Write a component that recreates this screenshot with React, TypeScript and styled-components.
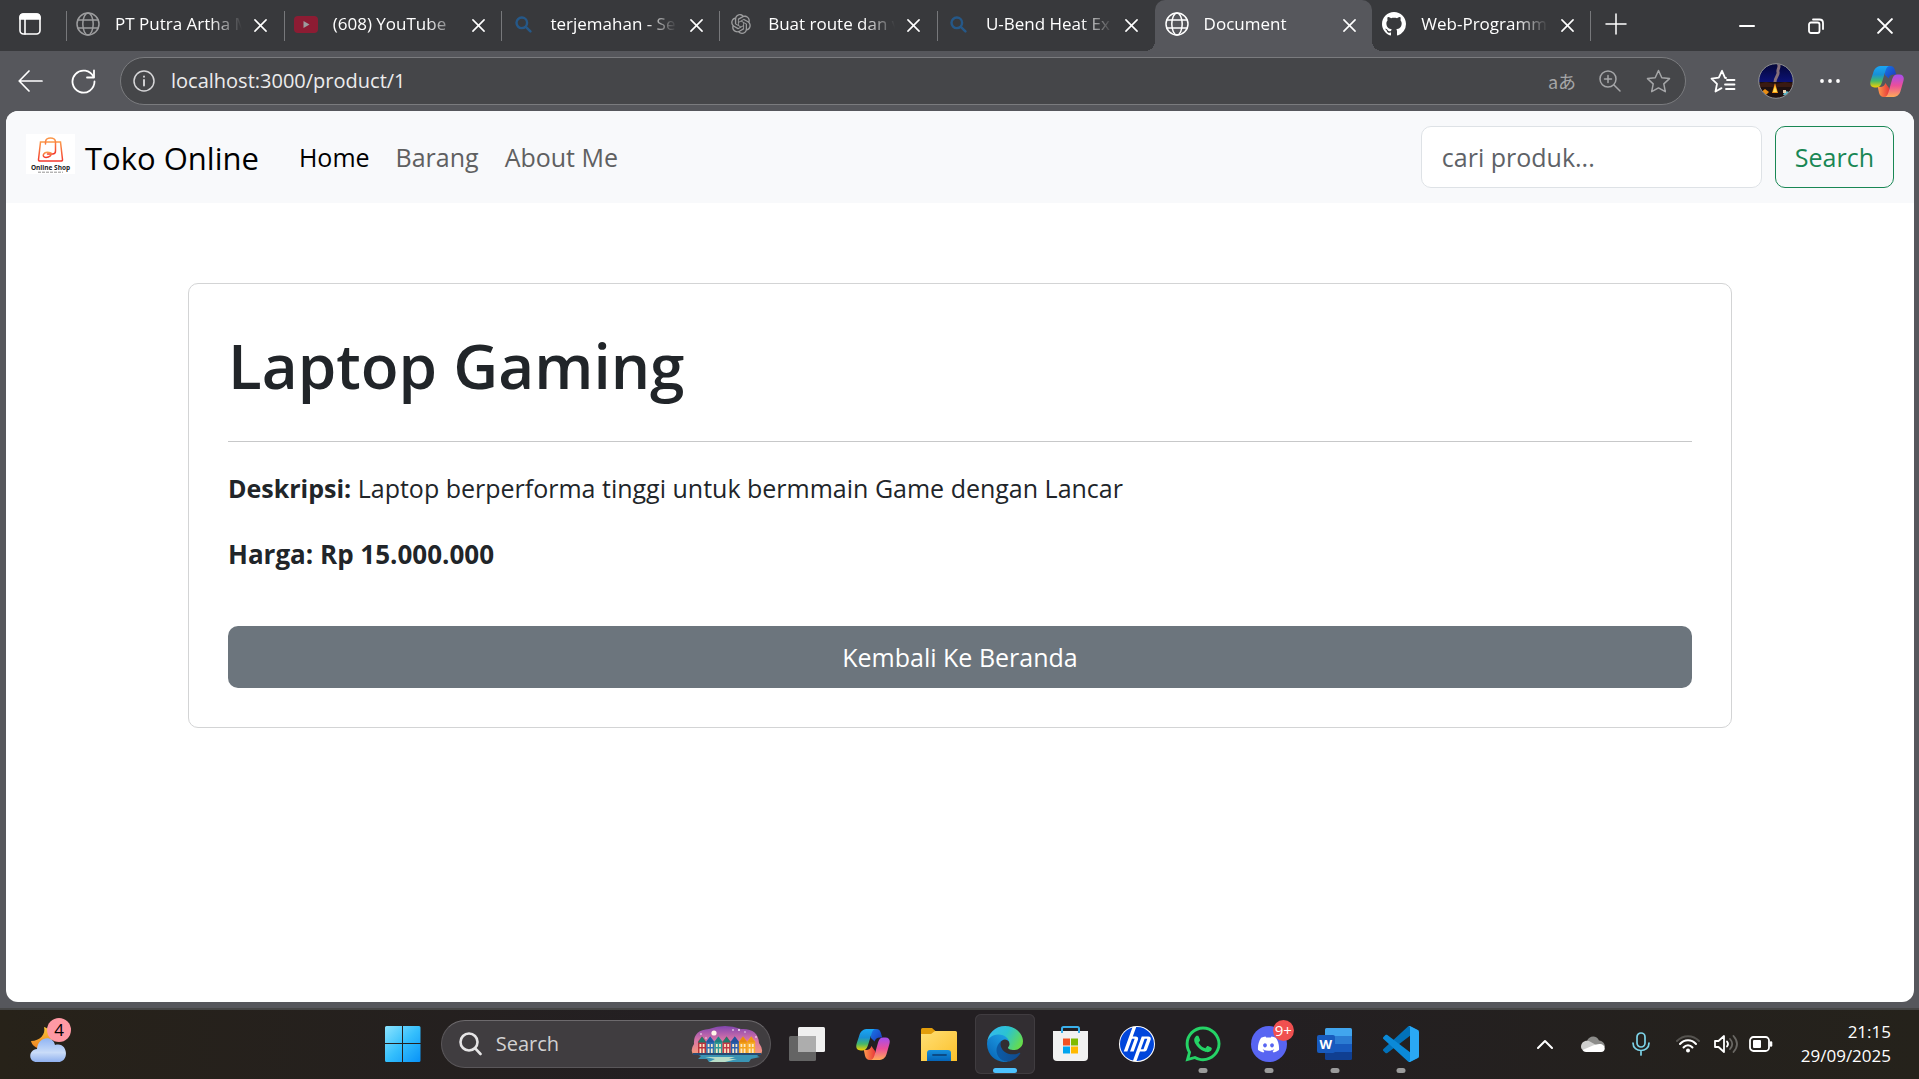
import React from "react";
import styled, { createGlobalStyle, css } from "styled-components";
import { RiOpenaiFill } from "react-icons/ri";
import { FaWhatsapp, FaDiscord } from "react-icons/fa6";
import { SiHp } from "react-icons/si";

const GlobalStyle = createGlobalStyle`
  * { box-sizing: border-box; }
  body { margin: 0; font-family: "Open Sans", "Noto Sans", "Noto Sans CJK JP", sans-serif; }
  button, input { font-family: inherit; margin: 0; }
  svg { display: block; flex: none; }
`;

const Screen = styled.div`
  display: flex;
  flex-direction: column;
  min-height: 100vh;
  background: #56575c;
`;

const plainButton = css`
  display: flex;
  align-items: center;
  justify-content: center;
  padding: 0;
  border: 0;
  background: none;
  color: #fff;
`;

/* ---------- Tab strip ---------- */

const TabStrip = styled.header`
  display: flex;
  height: 51px;
  background: #38393c;
`;

const PanelButton = styled.button`
  ${plainButton}
  width: 66px;
  padding-right: 6px;
  padding-bottom: 4px;
`;

const Tabs = styled.div`
  display: flex;
  flex: 1;
  min-width: 0;
`;

const Tab = styled.div<{ $active?: boolean; $divider?: boolean }>`
  position: relative;
  display: flex;
  align-items: center;
  flex: 1 1 0;
  min-width: 0;
  padding: 0 16px 3px 10px;

  ${(p) =>
    p.$divider &&
    css`
      background: linear-gradient(#77787b, #77787b) 0 11px / 1px 30px no-repeat;
    `}

  ${(p) =>
    p.$active &&
    css`
      background: #56575c;
      border-radius: 10px 10px 0 0;

      &::before,
      &::after {
        content: "";
        position: absolute;
        bottom: 0;
        width: 10px;
        height: 10px;
      }
      &::before {
        left: -10px;
        background: radial-gradient(circle at 0 0, transparent 10px, #56575c 10px);
      }
      &::after {
        right: -10px;
        background: radial-gradient(circle at 100% 0, transparent 10px, #56575c 10px);
      }
    `}
`;

const TabSelect = styled.button`
  ${plainButton}
  flex: 1;
  min-width: 0;
  justify-content: flex-start;
  gap: 15px;
`;

const TabIcon = styled.span<{ $dim?: boolean }>`
  display: flex;
  justify-content: center;
  width: 24px;
  flex: none;
  opacity: ${(p) => (p.$dim ? 0.5 : 1)};
`;

const TabTitle = styled.span`
  flex: 1;
  min-width: 0;
  overflow: hidden;
  white-space: nowrap;
  text-align: left;
  font-size: 17px;
  line-height: 24px;
  mask-image: linear-gradient(to right, #000 calc(100% - 42px), transparent calc(100% - 10px));
`;

const TabClose = styled.button`
  ${plainButton}
  width: 14px;
  margin-left: 2px;
  padding-top: 2px;
`;

const StripEnd = styled.div`
  display: flex;
  justify-content: space-between;
  width: 329px;
  background: linear-gradient(#77787b, #77787b) 0 11px / 1px 30px no-repeat;
`;

const NewTab = styled.button`
  ${plainButton}
  width: 52px;
  padding-bottom: 4px;
`;

const WindowControls = styled.div`
  display: flex;
`;

const WindowButton = styled.button`
  ${plainButton}
  width: 69px;
`;

/* ---------- Toolbar ---------- */

const Toolbar = styled.div`
  display: flex;
  align-items: center;
  height: 60px;
  padding: 0 3px 0 14px;
`;

const ToolButton = styled.button<{ $w: number }>`
  ${plainButton}
  width: ${(p) => p.$w}px;
  height: 48px;
`;

const AddressBar = styled.form`
  display: flex;
  align-items: center;
  flex: 1;
  height: 48px;
  margin: 0 10px 0 0;
  padding: 0 3px 0 12px;
  background: #454649;
  border: 1px solid #7a7b7e;
  border-radius: 24px;
`;

const AddressInput = styled.input`
  flex: 1;
  min-width: 0;
  padding: 0 0 0 16px;
  border: 0;
  background: none;
  color: #ececed;
  font-size: 20px;
  line-height: 28px;
`;

const BarButton = styled.button`
  ${plainButton}
  width: 48px;
  color: #a5a6a8;
  font-size: 18px;
  line-height: 24px;
  font-family: "Noto Sans CJK JP", sans-serif;
`;

/* ---------- Web page ---------- */

const Page = styled.div`
  flex: 1;
  margin: 0 5px 6px 6px;
  background: #fff;
  border-radius: 12px;
  overflow: hidden;
  color: #212529;
  font-size: 25px;
  line-height: 40px;
`;

const Navbar = styled.nav`
  display: flex;
  align-items: center;
  padding: 15px 20px;
  background: #f8f9fb;
`;

const Brand = styled.a`
  display: flex;
  align-items: flex-start;
  gap: 10px;
  margin-right: 27px;
  padding-top: 2px;
  color: #000;
  font-size: 31px;
  line-height: 48px;
  text-decoration: none;
`;

const NavLinks = styled.ul`
  display: flex;
  flex: 1;
  margin: 0;
  padding: 0;
  list-style: none;
`;

const NavLink = styled.a<{ $active?: boolean }>`
  display: block;
  padding: 0 13px;
  color: ${(p) => (p.$active ? "#000" : "#5f6061")};
  text-decoration: none;
`;

const SearchForm = styled.form`
  display: flex;
  gap: 13px;
`;

const SearchInput = styled.input`
  width: 341px;
  height: 62px;
  padding: 0 20px;
  border: 1px solid #dee2e6;
  border-radius: 10px;
  background: #fff;
  font-size: 25px;
  &::placeholder {
    color: #5e6267;
    opacity: 1;
  }
`;

const SearchButton = styled.button`
  height: 62px;
  padding: 0 19px;
  border: 1px solid #198754;
  border-radius: 10px;
  background: none;
  color: #198754;
  font-size: 25px;
`;

const Container = styled.main`
  max-width: 1544px;
  margin: 80px auto 0;
`;

const Card = styled.article`
  padding: 39px;
  border: 1px solid #d3d4d5;
  border-radius: 10px;
`;

const Title = styled.h1`
  margin: 0 0 34px;
  font-size: 62px;
  font-weight: 600;
  line-height: 84px;
`;

const Rule = styled.hr`
  height: 1px;
  margin: 0 0 26px;
  border: 0;
  background: #c7c8c9;
`;

const Text = styled.p<{ $bold?: boolean }>`
  margin: 0 0 26px;
  font-size: ${(p) => (p.$bold ? 26 : 25)}px;
  font-weight: ${(p) => (p.$bold ? 700 : 400)};
`;

const BackLink = styled.a`
  display: block;
  margin-top: 52px;
  padding: 11px 20px;
  border-radius: 10px;
  background: #6c757d;
  color: #fff;
  text-align: center;
  text-decoration: none;
`;

/* ---------- Taskbar ---------- */

const Taskbar = styled.footer`
  display: grid;
  grid-template-columns: 16fr auto 21fr;
  height: 71px;
  padding-bottom: 1px;
  border-top: 2px solid #454544;
  background: linear-gradient(to right, #272219, #231f22 35%, #231f22 65%, #25221b);
  color: #fff;
`;

const Widgets = styled.div`
  display: flex;
  align-items: center;
  padding-left: 29px;
`;

const TaskGroup = styled.div`
  display: flex;
  align-items: center;
`;

const TaskButton = styled.button<{ $active?: boolean }>`
  ${plainButton}
  position: relative;
  width: 60px;
  height: 60px;
  margin: 0 3px;
  border-radius: 6px;
  ${(p) =>
    p.$active &&
    css`
      background: #322e32;
      box-shadow: inset 0 0 0 1px #403c40;
    `}
`;

const Indicator = styled.span<{ $active?: boolean }>`
  position: absolute;
  bottom: 1px;
  left: 50%;
  width: ${(p) => (p.$active ? 24 : 9)}px;
  height: 5px;
  border-radius: 3px;
  background: ${(p) => (p.$active ? "#4cc2ff" : "#9b9b9b")};
  transform: translateX(-50%);
`;

const Badge = styled.span<{ $tone: "pink" | "red" }>`
  position: absolute;
  top: ${(p) => (p.$tone === "pink" ? 4 : 6)}px;
  right: ${(p) => (p.$tone === "pink" ? 0 : 5)}px;
  width: ${(p) => (p.$tone === "pink" ? 24 : 21)}px;
  height: ${(p) => (p.$tone === "pink" ? 24 : 21)}px;
  border-radius: 50%;
  background: ${(p) => (p.$tone === "pink" ? "#ff99a4" : "#f05050")};
  color: ${(p) => (p.$tone === "pink" ? "#000" : "#fff")};
  font-size: ${(p) => (p.$tone === "pink" ? 17 : 15)}px;
  line-height: ${(p) => (p.$tone === "pink" ? 24 : 20)}px;
  text-align: center;
`;

const WidgetButton = styled.button`
  ${plainButton}
  position: relative;
  width: 42px;
  height: 60px;
  justify-content: flex-start;
`;

const TaskSearch = styled.label`
  display: flex;
  align-items: center;
  width: 330px;
  height: 48px;
  margin: 0 3px 0 5px;
  padding: 0 7px 0 17px;
  border: 1px solid #5a575a;
  border-top-color: #6d6a6d;
  border-radius: 24px;
  background: #403d40;
`;

const TaskSearchInput = styled.input`
  flex: 1;
  min-width: 0;
  padding: 0 0 0 14px;
  border: 0;
  background: none;
  font-size: 20px;
  line-height: 28px;
  &::placeholder {
    color: #d2d1d2;
    opacity: 1;
  }
`;

const Tray = styled.div`
  display: flex;
  align-items: center;
  justify-content: flex-end;
  padding-right: 28px;
`;

const TrayButton = styled.button<{ $w: number }>`
  ${plainButton}
  width: ${(p) => p.$w}px;
  height: 48px;
`;

const Clock = styled.time`
  width: 104px;
  margin-left: 5px;
  white-space: nowrap;
  display: flex;
  flex-direction: column;
  align-items: flex-end;
  font-size: 17px;
  line-height: 24px;
`;

const WordTile = styled.span`
  position: absolute;
  left: 12px;
  top: 21px;
  width: 18px;
  height: 18px;
  border-radius: 2px;
  background: #185abd;
  color: #fff;
  font-size: 13px;
  font-weight: 700;
  line-height: 18px;
  text-align: center;
`;

const HpDisk = styled.span`
  display: flex;
  padding: 1px;
  border-radius: 50%;
  background: #fff;
  color: #0046dc;
`;

const DiscordDisk = styled.span`
  display: flex;
  align-items: center;
  justify-content: center;
  width: 36px;
  height: 36px;
  border-radius: 50%;
  background: #5865f2;
`;

/* ---------- Drawings ---------- */

const stroke = { fill: "none", stroke: "currentColor", strokeLinecap: "round", strokeLinejoin: "round" } as const;

const CrossIcon = ({ size = 13, width = 1.7 }: { size?: number; width?: number }) => (
  <svg width={size} height={size} viewBox="0 0 14 14" {...stroke} strokeWidth={width}>
    <path d="M1 1l12 12M13 1L1 13" />
  </svg>
);

const GlobeIcon = () => (
  <svg width="24" height="24" viewBox="0 0 24 24" {...stroke} strokeWidth="1.5">
    <circle cx="12" cy="12" r="11" />
    <ellipse cx="12" cy="12" rx="5.2" ry="11" />
    <path d="M2 8h20M2 16h20" />
  </svg>
);

const YoutubeIcon = () => (
  <svg width="24" height="17" viewBox="0 0 24 17">
    <rect width="24" height="17" rx="4" fill="#e0002c" />
    <path d="M9.5 5l6 3.5-6 3.5z" fill="#fff" />
  </svg>
);

const BlueSearchIcon = () => (
  <svg width="17" height="17" viewBox="0 0 17 17" fill="none" stroke="#1478d4" strokeWidth="2.4" strokeLinecap="round">
    <circle cx="6.8" cy="6.8" r="5.3" />
    <path d="M10.8 10.8L15.4 15.4" />
  </svg>
);

const GithubIcon = () => (
  <svg width="24" height="24" viewBox="0 0 16 16" fill="currentColor">
    <path d="M8 0C3.58 0 0 3.58 0 8c0 3.54 2.29 6.53 5.47 7.59.4.07.55-.17.55-.38 0-.19-.01-.82-.01-1.49-2.01.37-2.53-.49-2.69-.94-.09-.23-.48-.94-.82-1.13-.28-.15-.68-.52-.01-.53.63-.01 1.08.58 1.23.82.72 1.21 1.87.87 2.33.66.07-.52.28-.87.51-1.07-1.78-.2-3.64-.89-3.64-3.95 0-.87.31-1.59.82-2.15-.08-.2-.36-1.02.08-2.12 0 0 .67-.21 2.2.82.64-.18 1.32-.27 2-.27s1.36.09 2 .27c1.53-1.04 2.2-.82 2.2-.82.44 1.1.16 1.92.08 2.12.51.56.82 1.27.82 2.15 0 3.07-1.87 3.75-3.65 3.95.29.25.54.73.54 1.48 0 1.07-.01 1.93-.01 2.2 0 .21.15.46.55.38A8.01 8.01 0 0 0 16 8c0-4.42-3.58-8-8-8z" />
  </svg>
);

const CopilotIcon = ({ id }: { id: string }) => (
  <svg width="34" height="31" viewBox="0 0 34 31">
    <defs>
      <linearGradient id={`${id}a`} x1="0" y1="0" x2="0" y2="1">
        <stop offset="0" stopColor="#1aa6f5" />
        <stop offset=".4" stopColor="#1890d6" />
        <stop offset=".7" stopColor="#45b86a" />
        <stop offset="1" stopColor="#f5d000" />
      </linearGradient>
      <linearGradient id={`${id}b`} x1="0" y1="0" x2="0" y2="1">
        <stop offset="0" stopColor="#a44df0" />
        <stop offset=".5" stopColor="#ec4f9a" />
        <stop offset="1" stopColor="#ffab58" />
      </linearGradient>
      <linearGradient id={`${id}c`} x1="0" y1="0" x2="1" y2="1">
        <stop offset="0" stopColor="#1877e8" />
        <stop offset="1" stopColor="#1d36b8" />
      </linearGradient>
      <linearGradient id={`${id}d`} x1="0" y1="0" x2="1" y2="0">
        <stop offset="0" stopColor="#ff9a4c" />
        <stop offset="1" stopColor="#e83a3a" />
      </linearGradient>
    </defs>
    <path d="M15 0h5c3 0 4.3 1.6 5 4.2L26.2 8.6H24c-3 0-4.6 1.2-5.4 4L15 9z" fill={`url(#${id}c)`} />
    <path d="M19 31h-5c-3 0-4.3-1.6-5-4.2L7.8 21H10c3 0 4.6-1.2 5.4-4L19 22z" fill={`url(#${id}d)`} />
    <path d="M12 0h8c-2.6 0-3.6 2-4.4 4.6L11.8 16.8C10.8 20 9.2 21.4 6.8 21.4H4.6C.6 21.4-.4 18.4.6 14.8L3.6 5.6C4.8 2 7.4 0 12 0z" fill={`url(#${id}a)`} />
    <path d="M22 31h-8c2.6 0 3.6-2 4.4-4.6L22.2 13c1-3.2 2.6-4.6 5-4.6h2.2c4 0 5 3 4 6.6l-3 10.4C29.2 29 26.6 31 22 31z" fill={`url(#${id}b)`} />
  </svg>
);

const StarIcon = () => (
  <svg width="25" height="25" viewBox="0 0 25 25" {...stroke} strokeWidth="1.5">
    <path d="M12.5 1.5l3.3 7.2 7.7.9-5.7 5.3 1.5 7.8-6.8-3.8-6.8 3.8 1.5-7.8L1.5 9.6l7.7-.9z" />
  </svg>
);

const FavoritesIcon = () => (
  <svg width="26" height="25" viewBox="0 0 26 25" {...stroke} strokeWidth="1.8">
    <path d="M16 9l-1-.2L12 1.8 8.8 8.7l-7.3.9 5.5 5.2-1.5 7.7 6-3.4" />
    <path d="M17 11h7.5M15 15.5h9.5M16 20h8.5" />
  </svg>
);

const AvatarIcon = () => (
  <svg width="36" height="36" viewBox="0 0 36 36">
    <defs>
      <clipPath id="avatarClip"><circle cx="18" cy="18" r="17" /></clipPath>
      <linearGradient id="avatarSky" x1="0" y1="0" x2="0" y2="1">
        <stop offset="0" stopColor="#040634" />
        <stop offset="1" stopColor="#0c1276" />
      </linearGradient>
    </defs>
    <g clipPath="url(#avatarClip)">
      <rect width="36" height="19" fill="url(#avatarSky)" />
      <rect y="19" width="36" height="17" fill="#1d0f10" />
      <path d="M0 21l8-2 9 2 10-2 9 2v3H0z" fill="#3a1a12" />
      <path d="M20 0c3 4-1 6 0 9s-3 5-3 10" fill="none" stroke="#86707a" strokeWidth="3" />
      <path d="M17 20l3 10h-6z" fill="#ff9a12" />
      <path d="M17 23l2 6h-4z" fill="#ffe25a" />
      <path d="M2 30l5-4 4 3-4 4z" fill="#e88d14" />
      <path d="M27 28l5 1-2 4-5-1z" fill="#5fb8c8" />
      <rect x="25" y="27" width="3" height="3" fill="#e8d0b0" />
    </g>
    <circle cx="18" cy="18" r="17.3" fill="none" stroke="#8b8c90" />
  </svg>
);

const ShopLogo = () => (
  <svg width="49" height="40" viewBox="0 0 49 40">
    <defs>
      <linearGradient id="bag" x1="0" y1="0" x2="0" y2="1">
        <stop offset="0" stopColor="#fb9a4b" />
        <stop offset="1" stopColor="#f4382c" />
      </linearGradient>
    </defs>
    <rect width="49" height="40" fill="#fff" />
    <g fill="none" stroke="url(#bag)" strokeWidth="1.5" strokeLinecap="round">
      <path d="M14.500 8h20l2 17.500q.2 1.500-1.500 1.500H14q-1.700 0-1.500-1.500z" />
      <path d="M19.500 10V8C19.500 2.500 29.500 2.500 29.500 8v9q0 3-3 3h-5" />
      <path d="M25 19c-8-3-10 4.500-5 4.500 3 0 6-2 5-4.500z" />
    </g>
    <text x="24.500" y="36" textAnchor="middle" fontFamily="Open Sans, sans-serif" fontSize="6.500" fontWeight="700" fill="#222">
      Online Shop
    </text>
    <path d="M12 38.200h25" stroke="#777" strokeDasharray="3 1" strokeWidth=".8" />
  </svg>
);

const WeatherIcon = () => (
  <svg width="38" height="37" viewBox="0 0 38 37">
    <defs>
      <linearGradient id="cloud" x1="0" y1="0" x2="0" y2="1">
        <stop offset="0" stopColor="#90b4f4" />
        <stop offset=".6" stopColor="#c9dcf8" />
        <stop offset="1" stopColor="#8fb0ee" />
      </linearGradient>
      <linearGradient id="moon" x1="0" y1="0" x2="0" y2="1">
        <stop offset="0" stopColor="#f8c63a" />
        <stop offset="1" stopColor="#ef8221" />
      </linearGradient>
    </defs>
    <path d="M15 1c2 7-4 14-13 14 1 5 7 9 13 7 7-2 9-8 8-12-1-5-4-8-8-9z" fill="url(#moon)" />
    <path d="M8 36c-9 0-9-12 0-13C9 10 24 9 26 19c13-4 15 17 3 17z" fill="url(#cloud)" />
  </svg>
);

const WindowsIcon = () => (
  <svg width="36" height="36" viewBox="0 0 36 36">
    <defs>
      <linearGradient id="win" gradientUnits="userSpaceOnUse" x1="0" y1="0" x2="36" y2="36">
        <stop offset="0" stopColor="#8ce4ff" />
        <stop offset=".5" stopColor="#35bffc" />
        <stop offset="1" stopColor="#0791f8" />
      </linearGradient>
    </defs>
    <path d="M1.5 0H17v17H0V1.5Q0 0 1.5 0zM18 0H34q1.5 0 1.5 1.5V17H18zM0 18h17V36H1.5Q0 36 0 34.5zM18 18h17.5v16.5q0 1.5-1.5 1.5H18z" fill="url(#win)" />
  </svg>
);

const houses = [
  ["#b8323c", "#1f7a6c"],
  ["#2d6fb5", "#2456a0"],
  ["#2f9c98", "#217f80"],
  ["#c03a48", "#1f7a6c"],
  ["#2c5fae", "#24509a"],
  ["#f5a31c", "#e88a10"],
  ["#f8b02a", "#ee9614"],
];

const HousesPicture = () => (
  <svg width="72" height="36" viewBox="0 0 72 36">
    <defs>
      <linearGradient id="dusk" x1="0" y1="0" x2="0" y2="1">
        <stop offset="0" stopColor="#8145b0" />
        <stop offset=".5" stopColor="#d874a8" />
        <stop offset="1" stopColor="#f59a78" />
      </linearGradient>
    </defs>
    <path d="M2 28Q-1 24 3 18 2 4 18 3 34-3 50 3q17-1 18 14 5 7 2 11z" fill="url(#dusk)" />
    <path d="M2 27h68l-4 3 3 1-9 2-2 3H18l-2-3H7l3-3z" fill="#3a94b4" />
    <path d="M14 31h30l-6 2h8l-12 3H18l6-3z" fill="#b9ddc8" />
    <rect x="2" y="27" width="68" height="2" fill="#274a72" />
    <circle cx="23" cy="7" r="2.6" fill="#fff6e8" />
    <g fill="#fff">
      <circle cx="10" cy="8" r=".8" /><circle cx="15" cy="12" r=".7" /><circle cx="42" cy="4" r=".8" />
      <circle cx="48" cy="4" r=".9" /><circle cx="54" cy="6" r=".7" /><circle cx="65" cy="11" r=".8" />
    </g>
    {houses.map(([wall, roof], i) => (
      <g key={i} transform={`translate(${7 + i * 8.2} 0)`}>
        <path d="M0 27V15.5L4 10.5l4 5V27z" fill={wall} />
        <path d="M-.2 16.5L4 10.5l4.2 6z" fill={roof} />
        <path d="M1.5 18h1.8v3H1.5zM4.7 18h1.8v3H4.7zM1.5 22.5h1.8V27H1.5zM4.7 22.5h1.8V27H4.7z" fill="#fbe8c4" />
      </g>
    ))}
  </svg>
);

const TaskSearchIcon = () => (
  <svg width="23" height="24" viewBox="0 0 23 24" fill="none" stroke="#e6e5e6" strokeWidth="2.6" strokeLinecap="round">
    <circle cx="10" cy="10" r="8.5" />
    <path d="M16.2 16.4L21.5 22" />
  </svg>
);

const TaskViewIcon = () => (
  <svg width="36" height="34" viewBox="0 0 36 34">
    <rect y="9" width="27" height="25" rx="1.5" fill="#646464" />
    <rect x="9" width="27" height="25" rx="1.5" fill="#f0f0f0" />
    <path d="M9 9h18v16H9z" fill="#adadad" />
  </svg>
);

const FolderIcon = () => (
  <svg width="36" height="33" viewBox="0 0 36 33">
    <defs>
      <linearGradient id="folder" x1="0" y1="0" x2="1" y2="1">
        <stop offset="0" stopColor="#ffdf75" />
        <stop offset="1" stopColor="#fcc02a" />
      </linearGradient>
      <linearGradient id="folderBlue" x1="0" y1="0" x2="0" y2="1">
        <stop offset="0" stopColor="#1690dc" />
        <stop offset="1" stopColor="#0564b8" />
      </linearGradient>
    </defs>
    <path d="M0 1.5Q0 0 1.5 0H11l4 3.5V8H0z" fill="#e39d0b" />
    <path d="M0 6h10l4-3h20.5Q36 3 36 4.5V33H0z" fill="url(#folder)" />
    <path d="M6 33v-8q0-3 3-3h18q3 0 3 3v8z" fill="url(#folderBlue)" />
    <path d="M12 27h13" stroke="#0b4b86" strokeWidth="1.8" strokeLinecap="round" />
  </svg>
);

const EdgeIcon = () => (
  <svg width="36" height="36" viewBox="0 0 256 256">
    <defs>
      <linearGradient id="edgeA" x1=".2" y1=".5" x2="1" y2=".5">
        <stop offset="0" stopColor="#0c59a4" />
        <stop offset="1" stopColor="#114a8b" />
      </linearGradient>
      <linearGradient id="edgeB" x1=".9" y1=".2" x2=".3" y2="1">
        <stop offset="0" stopColor="#1b9de2" />
        <stop offset=".5" stopColor="#1483d0" />
        <stop offset="1" stopColor="#0868b8" />
      </linearGradient>
      <linearGradient id="edgeC" x1="0" y1=".2" x2="1" y2=".6">
        <stop offset="0" stopColor="#35b8f1" />
        <stop offset=".5" stopColor="#2bc3d2" />
        <stop offset="1" stopColor="#66dc4c" />
      </linearGradient>
    </defs>
    <g transform="translate(-4.63 -4.92)">
      <path fill="url(#edgeA)" d="M235.68 195.46a93.73 93.73 0 0 1-10.54 4.71 101.87 101.87 0 0 1-35.9 6.46c-47.32 0-88.54-32.55-88.54-74.32A31.48 31.48 0 0 1 117.13 105c-42.8 1.8-53.8 46.4-53.8 72.53 0 73.88 68.09 81.37 82.76 81.37 7.91 0 19.84-2.3 27-4.56l1.31-.44a128.34 128.34 0 0 0 66.6-52.8 4 4 0 0 0-5.32-5.64Z" />
      <path fill="url(#edgeB)" d="M110.34 246.34A79.2 79.2 0 0 1 87.6 225a80.72 80.72 0 0 1 29.53-120c3.12-1.47 8.45-4.13 15.54-4a32.35 32.35 0 0 1 25.69 13 31.88 31.88 0 0 1 6.36 18.66c0-.21 24.46-79.6-80-79.6-43.9 0-80 41.66-80 78.21a130.15 130.15 0 0 0 12.11 56 128 128 0 0 0 156.38 67.11 75.55 75.55 0 0 1-62.78-8Z" />
      <path fill="url(#edgeC)" d="M156.94 153.78c-.81 1.05-3.3 2.5-3.3 5.66 0 2.61 1.7 5.12 4.72 7.23 14.38 10 41.49 8.68 41.56 8.68a59.56 59.56 0 0 0 30.27-8.35 61.38 61.38 0 0 0 30.43-52.88c.26-22.41-8-37.31-11.34-43.91C228.09 28.76 182.35 4.92 132.61 4.92a128 128 0 0 0-128 126.2c.48-36.54 36.8-66.05 80-66.05 3.5 0 23.46.34 42 10.07 16.34 8.58 24.9 18.94 30.85 29.21 6.18 10.67 7.28 24.15 7.28 29.52s-2.74 13.33-7.8 19.91Z" />
    </g>
  </svg>
);

const StoreIcon = () => (
  <svg width="36" height="36" viewBox="0 0 36 36">
    <path d="M0 5h35v26q0 4-4 4H4q-4 0-4-4z" fill="#f1f1f1" />
    <path d="M9 7V2.5Q9 1 10.5 1h14Q26 1 26 2.5V7" fill="none" stroke="#3ab0ec" strokeWidth="2" />
    <path d="M10 12.5h7v7h-7z" fill="#f25022" />
    <path d="M18 12.5h7v7h-7z" fill="#7fba00" />
    <path d="M10 20.5h7v7h-7z" fill="#00a4ef" />
    <path d="M18 20.5h7v7h-7z" fill="#ffb900" />
  </svg>
);

const WordPagesIcon = () => (
  <svg width="36" height="32" viewBox="0 0 36 32">
    <path d="M8 8V1.5Q8 0 9.5 0h24Q35 0 35 1.5V8z" fill="#41a5ee" />
    <path d="M8 8h27v8H8z" fill="#2b7cd3" />
    <path d="M8 16h27v8H8z" fill="#185abd" />
    <path d="M8 24h27v6.5q0 1.5-1.5 1.5h-24Q8 32 8 30.5z" fill="#103f91" />
  </svg>
);

const CodeIcon = () => (
  <svg width="36" height="36" viewBox="0 0 100 100">
    <path fill="#0272ba" d="M96.46 10.8L75.86.88C73.47-.27 70.62.21 68.75 2.08L1.3 63.58c-1.81 1.66-1.81 4.51 0 6.16l5.51 5.01c1.49 1.35 3.72 1.45 5.32.24l81.23-61.62C96.09 11.3 100 13.25 100 16.67v-.24c0-2.4-1.38-4.59-3.54-5.63z" />
    <path fill="#0b8ad8" d="M96.46 89.2l-20.6 9.92c-2.39 1.15-5.24.67-7.11-1.2L1.3 36.42c-1.81-1.66-1.81-4.51 0-6.17l5.51-5c1.49-1.35 3.72-1.45 5.32-.24l81.23 61.62C96.09 88.7 100 86.75 100 83.33v.24c0 2.4-1.38 4.59-3.54 5.63z" />
    <path fill="#2aa8f4" d="M75.86 99.13c-2.39 1.14-5.24.66-7.11-1.21C71.06 100.22 75 98.59 75 95.33V4.67c0-3.26-3.94-4.89-6.25-2.59C70.62.21 73.47-.27 75.86.87l20.6 9.91C98.62 11.82 100 14.01 100 16.41v67.18c0 2.4-1.38 4.59-3.54 5.63z" />
  </svg>
);

/* ---------- Data ---------- */

const tabs = [
  { title: "PT Putra Artha M", icon: <GlobeIcon />, dim: true, divider: true },
  { title: "(608) YouTube", icon: <YoutubeIcon />, dim: true, divider: true },
  { title: "terjemahan - Se", icon: <BlueSearchIcon />, dim: true, divider: true },
  { title: "Buat route dan v", icon: <RiOpenaiFill size={24} />, dim: true, divider: true },
  { title: "U-Bend Heat Ex", icon: <BlueSearchIcon />, dim: true, divider: true },
  { title: "Document", icon: <GlobeIcon />, active: true },
  { title: "Web-Programm", icon: <GithubIcon /> },
];

const navLinks = [
  { text: "Home", active: true },
  { text: "Barang" },
  { text: "About Me" },
];

export default function App() {
  return (
    <Screen>
      <GlobalStyle />
      <TabStrip>
        <PanelButton aria-label="Tab actions">
          <svg width="22" height="22" viewBox="0 0 22 22" {...stroke} strokeWidth="1.6">
            <rect x="1" y="1" width="20" height="20" rx="3.5" />
            <path d="M1 4.5Q1 1 4.5 1h13Q21 1 21 4.5V6H1z" fill="currentColor" />
            <path d="M6 6v15" />
          </svg>
        </PanelButton>
        <Tabs>
          {tabs.map((tab) => (
            <Tab key={tab.title} $active={tab.active} $divider={tab.divider}>
              <TabSelect>
                <TabIcon $dim={tab.dim}>{tab.icon}</TabIcon>
                <TabTitle>{tab.title}</TabTitle>
              </TabSelect>
              <TabClose aria-label={`Close ${tab.title}`}>
                <CrossIcon />
              </TabClose>
            </Tab>
          ))}
        </Tabs>
        <StripEnd>
          <NewTab aria-label="New tab">
            <svg width="22" height="22" viewBox="0 0 22 22" {...stroke} strokeWidth="1.5">
              <path d="M11 1v20M1 11h20" />
            </svg>
          </NewTab>
          <WindowControls>
            <WindowButton aria-label="Minimize">
              <svg width="16" height="16" viewBox="0 0 16 16" {...stroke} strokeWidth="2">
                <path d="M1 8h14" />
              </svg>
            </WindowButton>
            <WindowButton aria-label="Restore">
              <svg width="16" height="16" viewBox="0 0 16 16" {...stroke} strokeWidth="1.8">
                <rect x="1" y="4.5" width="10.5" height="10.5" rx="2" />
                <path d="M5 1.5h6.5Q15 1.5 15 5v6" />
              </svg>
            </WindowButton>
            <WindowButton aria-label="Close window">
              <CrossIcon size={16} width={1.8} />
            </WindowButton>
          </WindowControls>
        </StripEnd>
      </TabStrip>

      <Toolbar>
        <ToolButton $w={32} aria-label="Back">
          <svg width="25" height="22" viewBox="0 0 25 22" {...stroke} strokeWidth="1.7">
            <path d="M24 11H1.5M11 1L1.2 11 11 21" />
          </svg>
        </ToolButton>
        <ToolButton $w={74} aria-label="Refresh">
          <svg width="25" height="25" viewBox="0 0 25 25" {...stroke} strokeWidth="1.8">
            <path d="M22.5 8A11 11 0 1 0 23.5 12.5" />
            <path d="M23 1.5V8.5H16" />
          </svg>
        </ToolButton>
        <AddressBar>
          <svg width="22" height="22" viewBox="0 0 22 22" {...stroke} stroke="#d6d6d8" strokeWidth="1.5">
            <circle cx="11" cy="11" r="10" />
            <path d="M11 10v5.5M11 6.5v.3" strokeWidth="1.9" />
          </svg>
          <AddressInput aria-label="Address" defaultValue="localhost:3000/product/1" />
          <BarButton type="button" aria-label="Translate">aあ</BarButton>
          <BarButton type="button" aria-label="Zoom">
            <svg width="22" height="22" viewBox="0 0 22 22" {...stroke} strokeWidth="1.5">
              <circle cx="9" cy="9" r="8" />
              <path d="M15 15l6 6M9 5.5v7M5.5 9h7" />
            </svg>
          </BarButton>
          <BarButton type="button" aria-label="Add to favorites">
            <StarIcon />
          </BarButton>
        </AddressBar>
        <ToolButton $w={53} aria-label="Favorites"><FavoritesIcon /></ToolButton>
        <ToolButton $w={54} aria-label="Profile"><AvatarIcon /></ToolButton>
        <ToolButton $w={54} aria-label="Settings and more">
          <svg width="20" height="4" viewBox="0 0 20 4" fill="currentColor">
            <circle cx="2" cy="2" r="1.9" /><circle cx="10" cy="2" r="1.9" /><circle cx="18" cy="2" r="1.9" />
          </svg>
        </ToolButton>
        <ToolButton $w={59} aria-label="Copilot"><CopilotIcon id="bar" /></ToolButton>
      </Toolbar>

      <Page>
        <Navbar>
          <Brand href="#">
            <ShopLogo />
            Toko Online
          </Brand>
          <NavLinks>
            {navLinks.map((link) => (
              <li key={link.text}>
                <NavLink href="#" $active={link.active}>{link.text}</NavLink>
              </li>
            ))}
          </NavLinks>
          <SearchForm>
            <SearchInput type="search" aria-label="cari produk" placeholder="cari produk..." />
            <SearchButton type="submit">Search</SearchButton>
          </SearchForm>
        </Navbar>
        <Container>
          <Card>
            <Title>Laptop Gaming</Title>
            <Rule />
            <Text>
              <strong>Deskripsi:</strong> Laptop berperforma tinggi untuk bermmain Game dengan Lancar
            </Text>
            <Text $bold>Harga: Rp 15.000.000</Text>
            <BackLink href="#">Kembali Ke Beranda</BackLink>
          </Card>
        </Container>
      </Page>

      <Taskbar>
        <Widgets>
          <WidgetButton aria-label="Widgets">
            <WeatherIcon />
            <Badge $tone="pink">4</Badge>
          </WidgetButton>
        </Widgets>
        <TaskGroup>
          <TaskButton aria-label="Start"><WindowsIcon /></TaskButton>
          <TaskSearch>
            <TaskSearchIcon />
            <TaskSearchInput aria-label="Search" placeholder="Search" />
            <HousesPicture />
          </TaskSearch>
          <TaskButton aria-label="Task view"><TaskViewIcon /></TaskButton>
          <TaskButton aria-label="Copilot"><CopilotIcon id="task" /></TaskButton>
          <TaskButton aria-label="File Explorer"><FolderIcon /></TaskButton>
          <TaskButton $active aria-label="Edge"><EdgeIcon /><Indicator $active /></TaskButton>
          <TaskButton aria-label="Store"><StoreIcon /></TaskButton>
          <TaskButton aria-label="HP"><HpDisk><SiHp size={34} /></HpDisk></TaskButton>
          <TaskButton aria-label="WhatsApp"><FaWhatsapp size={40} color="#25d366" /><Indicator /></TaskButton>
          <TaskButton aria-label="Discord">
            <DiscordDisk><FaDiscord size={23} /></DiscordDisk>
            <Badge $tone="red">9+</Badge>
            <Indicator />
          </TaskButton>
          <TaskButton aria-label="Word"><WordPagesIcon /><WordTile>W</WordTile><Indicator /></TaskButton>
          <TaskButton aria-label="Visual Studio Code"><CodeIcon /><Indicator /></TaskButton>
        </TaskGroup>
        <Tray>
          <TrayButton $w={48} aria-label="Show hidden icons">
            <svg width="16" height="10" viewBox="0 0 16 10" {...stroke} strokeWidth="2"><path d="M1 9l7-7 7 7" /></svg>
          </TrayButton>
          <TrayButton $w={48} aria-label="OneDrive">
            <svg width="24" height="16" viewBox="0 0 24 16">
              <path d="M6 5C8-1 16-1 18 4.5c4 0 6 4 6 6.5L12 9z" fill="#8c8c8a" />
              <path d="M0 11C0 6 4 4 8 5l9 5-12 5C2 15 0 13 0 11z" fill="#cfcfce" />
              <path d="M1.5 14L12 9.5q4-2 8-1.5c5 1 5 8 0 8H5q-2.5 0-3.5-2z" fill="#fff" />
            </svg>
          </TrayButton>
          <TrayButton $w={47} aria-label="Microphone">
            <svg width="18" height="24" viewBox="0 0 18 24" {...stroke} stroke="#7dd3e8" strokeWidth="1.7">
              <rect x="5" y="1" width="8" height="14" rx="4" />
              <path d="M1 11c0 10 16 10 16 0M9 19v4" />
            </svg>
          </TrayButton>
          <TrayButton $w={47} aria-label="Wi-Fi">
            <svg width="24" height="18" viewBox="0 0 24 18" {...stroke} strokeWidth="2">
              <path d="M1 6C7-.5 17-.5 23 6" stroke="#55534f" />
              <path d="M4 9c4.5-5 11.5-5 16 0M7.5 12.5c2.5-3 6.5-3 9 0" />
              <circle cx="12" cy="15.5" r="2" fill="currentColor" stroke="none" />
            </svg>
          </TrayButton>
          <TrayButton $w={30} aria-label="Volume">
            <svg width="24" height="20" viewBox="0 0 24 20" {...stroke} strokeWidth="1.8">
              <path d="M1 7h3.5L10 2v16l-5.5-5H1z" />
              <path d="M13 7.5q2 2.5 0 5" />
              <path d="M16 5q4.5 5 0 10M19.5 2q7 8 0 16" stroke="#6a6864" />
            </svg>
          </TrayButton>
          <TrayButton $w={41} aria-label="Battery">
            <svg width="25" height="16" viewBox="0 0 25 16" {...stroke} strokeWidth="1.8">
              <rect x="1" y="1" width="19" height="14" rx="3.5" />
              <rect x="4" y="4" width="8" height="8" rx="1" fill="currentColor" stroke="none" />
              <path d="M22 6.5v3" strokeWidth="2.6" />
            </svg>
          </TrayButton>
          <Clock dateTime="2025-09-29T21:15">
            <span>21:15</span>
            <span>29/09/2025</span>
          </Clock>
        </Tray>
      </Taskbar>
    </Screen>
  );
}
